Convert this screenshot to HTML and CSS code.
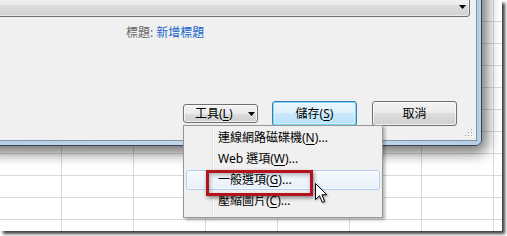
FILE: index.html
```html
<!DOCTYPE html>
<html lang="zh-Hant">
<head>
<meta charset="utf-8">
<title>工具選單</title>
<link rel="stylesheet" href="styles.css">
</head>
<body>
<div class="shot">
  <div class="dialog">
    <div class="dialog-inner">
      <div class="dialog-top"></div>
      <div class="combo">
        <svg class="combo-arrow" width="7" height="4" viewBox="0 0 7 4"><polygon points="0,0 7,0 3.5,4" fill="#000"/></svg>
      </div>
      <div class="title-row"><span class="title-label">標題:</span> <span class="title-link">新增標題</span></div>
      <div class="button-row">
        <button class="btn btn-split"><span>工具(<u>L</u>)</span><svg class="split-arrow" width="7" height="4" viewBox="0 0 7 4"><polygon points="0,0 7,0 3.5,4" fill="#000"/></svg></button>
        <button class="btn btn-default btn-save">儲存(<u>S</u>)</button>
        <button class="btn btn-cancel">取消</button>
      </div>
      <svg class="grip" width="8" height="8" viewBox="0 0 8 8">
        <rect x="6" y="0" width="1" height="1" fill="#a0a0a0"/><rect x="7" y="1" width="1" height="1" fill="#fff"/>
        <rect x="3" y="3" width="1" height="1" fill="#a0a0a0"/><rect x="4" y="4" width="1" height="1" fill="#fff"/>
        <rect x="6" y="3" width="1" height="1" fill="#a0a0a0"/><rect x="7" y="4" width="1" height="1" fill="#fff"/>
        <rect x="0" y="6" width="1" height="1" fill="#a0a0a0"/><rect x="1" y="7" width="1" height="1" fill="#fff"/>
        <rect x="3" y="6" width="1" height="1" fill="#a0a0a0"/><rect x="4" y="7" width="1" height="1" fill="#fff"/>
        <rect x="6" y="6" width="1" height="1" fill="#a0a0a0"/><rect x="7" y="7" width="1" height="1" fill="#fff"/>
      </svg>
    </div>
  </div>
  <ul class="menu">
    <li class="menu-item">連線網路磁碟機(<u>N</u>)...</li>
    <li class="menu-item">Web 選項(<u>W</u>)...</li>
    <li class="menu-item menu-item-hover">一般選項(<u>G</u>)...</li>
    <li class="menu-item">壓縮圖片(<u>C</u>)...</li>
  </ul>
  <div class="callout"></div>
  <svg class="cursor" width="14" height="22" viewBox="0 0 14 22">
    <polygon points="0.5,0.5 0.5,16.5 4.5,12.8 7.3,19.3 9.6,18.3 6.9,11.8 11.8,11.8" fill="#fff" stroke="#000" stroke-width="1" stroke-linejoin="miter"/>
  </svg>
</div>
</body>
</html>
```

FILE: styles.css
```css
html, body {
  margin: 0;
  padding: 0;
}

body {
  width: 507px;
  height: 236px;
  overflow: hidden;
  background: #ffffff;
  font-family: "Noto Sans", "Noto Sans CJK TC", sans-serif;
  font-size: 12px;
  color: #000;
}

.shot {
  position: relative;
  width: 502px;
  height: 231px;
  overflow: hidden;
  background-color: #ffffff;
  background-image:
    linear-gradient(to right, transparent 61px, #d9d9d9 61px, #d9d9d9 62px, transparent 62px),
    linear-gradient(to bottom, transparent 21px, #d9d9d9 21px, #d9d9d9 22px, transparent 22px);
  background-size: 72px 100%, 100% 22px;
  box-shadow: 3px 3px 3px rgba(0, 0, 0, 0.75);
}

/* dialog window */
.dialog {
  position: absolute;
  left: -20px;
  top: -40px;
  width: 502px;
  height: 186px;
  box-sizing: border-box;
  border: 1px solid #3b4652;
  border-radius: 0 0 6px 6px;
  padding: 4px;
  background: linear-gradient(to right, #b4cee8, #c3d8ee 45%, #b6cfe9);
  box-shadow: 2px 4px 14px 3px rgba(0, 0, 0, 0.55);
}

.dialog-inner {
  position: relative;
  height: 100%;
  box-sizing: border-box;
  border: 1px solid #85929f;
  background: #f0f0f0;
  padding-right: 6px;
  display: flex;
  flex-direction: column;
}

.dialog-top {
  height: 31px;
  flex: none;
}

.combo {
  flex: none;
  height: 20px;
  box-sizing: border-box;
  border: 1px solid #707070;
  border-radius: 0 0 3px 0;
  background: linear-gradient(to bottom, #f2f2f2 0%, #ebebeb 38%, #dcdcdc 42%, #d3d3d3 100%);
  box-shadow: inset 0 0 0 1px rgba(255, 255, 255, 0.45);
  display: flex;
  align-items: center;
  justify-content: flex-end;
  padding-right: 3px;
}

.combo-arrow {
  display: block;
}

.title-row {
  flex: none;
  margin-top: 8px;
  height: 16px;
  line-height: 16px;
  padding-left: 140px;
  white-space: nowrap;
}

.title-label {
  color: #6a6a6a;
}

.title-link {
  color: #1a66cc;
}

.button-row {
  flex: none;
  margin-top: 60px;
  height: 25px;
  padding-left: 197px;
  display: flex;
  align-items: center;
}

.btn {
  font: inherit;
  color: #000;
  margin: 0;
  padding: 0;
  box-sizing: border-box;
  width: 85px;
  height: 25px;
  line-height: 16px;
  border: 1px solid #707070;
  border-radius: 3px;
  background: linear-gradient(to bottom, #f2f2f2 0%, #ebebeb 50%, #dddddd 50%, #cfcfcf 100%);
  box-shadow: inset 0 0 0 1px rgba(252, 252, 252, 0.75);
  display: flex;
  align-items: center;
  justify-content: center;
  white-space: nowrap;
}

.btn u {
  text-underline-offset: 2px;
}

.btn-split {
  width: 75px;
  height: 19px;
  justify-content: space-between;
  padding-left: 11px;
  padding-right: 2px;
}

.split-arrow {
  display: block;
}

.btn-save {
  margin-left: 14px;
}

.btn-cancel {
  margin-left: 15px;
}

.btn-default {
  border-color: #3c7fb1;
  background: linear-gradient(to bottom, #eaf6fd 0%, #dcf1fc 50%, #c8e8f9 50%, #b9e1f6 100%);
  box-shadow: inset 0 0 0 1px #7fd6f7, inset 0 0 0 2px rgba(255, 255, 255, 0.35);
}

.grip {
  position: absolute;
  right: 3px;
  bottom: 3px;
}

/* popup menu */
.menu {
  position: absolute;
  left: 183px;
  top: 125px;
  width: 200px;
  height: 93px;
  box-sizing: border-box;
  margin: 0;
  padding: 1px 2px 2px;
  list-style: none;
  border: 1px solid #979797;
  background: linear-gradient(to right, #f0f0f0 0, #f0f0f0 28px, #e2e3e3 28px, #e2e3e3 29px, #ffffff 29px, #ffffff 30px, #f0f0f0 30px);
  box-shadow: 2px 2px 3px rgba(0, 0, 0, 0.3);
}

.menu-item {
  height: 20px;
  margin: 1px 0;
  box-sizing: border-box;
  border: 1px solid transparent;
  border-radius: 3px;
  padding-left: 31px;
  line-height: 18px;
  white-space: nowrap;
}

.menu-item u {
  text-underline-offset: 2px;
}

.menu-item-hover {
  border-color: #afcdf0;
  background: linear-gradient(to bottom, #f6f9fe, #e8f0fb);
  box-shadow: inset 0 0 0 1px rgba(255, 255, 255, 0.6);
}

/* annotation */
.callout {
  position: absolute;
  left: 206px;
  top: 170px;
  width: 107px;
  height: 26px;
  box-sizing: border-box;
  border: 3px solid #b3131c;
  box-shadow: 1px 2px 4px rgba(0, 0, 0, 0.45), inset 1px 2px 4px rgba(0, 0, 0, 0.3);
}

.cursor {
  position: absolute;
  left: 315px;
  top: 183px;
  filter: drop-shadow(1px 1px 1px rgba(0, 0, 0, 0.35));
}
```
